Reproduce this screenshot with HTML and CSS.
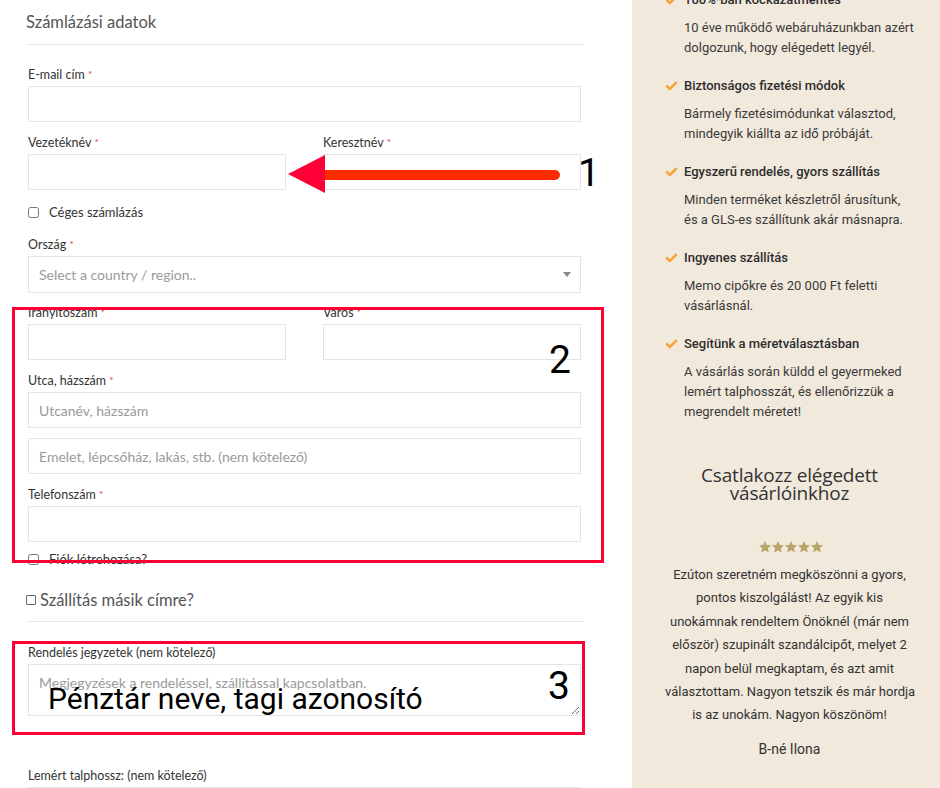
FILE: index.html
```html
<!DOCTYPE html>
<html lang="hu">
<head>
    <meta charset="UTF-8">
    <meta name="viewport" content="width=device-width, initial-scale=1.0">
    <title>Pénztár</title>
    <link rel="stylesheet" href="styles.css">
</head>
<body>
    <div class="page">
        <main class="checkout">
            <h3 class="section-title">Számlázási adatok</h3>

            <div class="field first">
                <label>E-mail cím <abbr>*</abbr></label>
                <input type="email">
            </div>

            <div class="field-row">
                <div class="field">
                    <label>Vezetéknév <abbr>*</abbr></label>
                    <input type="text">
                </div>
                <div class="field">
                    <label>Keresztnév <abbr>*</abbr></label>
                    <input type="text">
                </div>
            </div>

            <label class="check"><input type="checkbox"> Céges számlázás</label>

            <div class="field country">
                <label>Ország <abbr>*</abbr></label>
                <div class="select">
                    <span>Select a country / region..</span>
                    <b class="caret"></b>
                </div>
            </div>

            <div class="field-row zip">
                <div class="field">
                    <label>Irányítószám <abbr>*</abbr></label>
                    <input type="text">
                </div>
                <div class="field">
                    <label>Város <abbr>*</abbr></label>
                    <input type="text">
                </div>
            </div>

            <div class="field">
                <label>Utca, házszám <abbr>*</abbr></label>
                <input type="text" placeholder="Utcanév, házszám">
                <input type="text" class="second" placeholder="Emelet, lépcsőház, lakás, stb. (nem kötelező)">
            </div>

            <div class="field">
                <label>Telefonszám <abbr>*</abbr></label>
                <input type="tel">
            </div>

            <label class="check account"><input type="checkbox"> Fiók létrehozása?</label>

            <h3 class="section-title ship"><span class="box"></span>Szállítás másik címre?</h3>

            <div class="field notes">
                <label>Rendelés jegyzetek (nem kötelező)</label>
                <textarea placeholder="Megjegyzések a rendeléssel, szállítással kapcsolatban."></textarea>
            </div>

            <div class="field foot">
                <label>Lemért talphossz: (nem kötelező)</label>
                <input type="text">
            </div>

            <!-- annotations drawn over the form -->
            <div class="mark mark-2"></div>
            <div class="mark mark-3"></div>
            <svg class="arrow" width="275" height="48" viewBox="0 0 275 48">
                <line x1="36" y1="25" x2="269" y2="25" stroke="#ff2b00" stroke-width="10" stroke-linecap="round"/>
                <polygon points="2,24 39,5 39,43" fill="#ff0036"/>
            </svg>
            <span class="num num-1">1</span>
            <span class="num num-2">2</span>
            <span class="num num-3">3</span>
            <span class="note-text">Pénztár neve, tagi azonosító</span>
        </main>

        <aside class="sidebar">
            <div class="perk top">
                <div class="perk-title"><svg class="tick" width="13" height="10" viewBox="0 0 13 10"><polyline points="1.2,4.4 4.8,8 11.8,1.2" fill="none" stroke="#f7a13a" stroke-width="2.5"/></svg>100%-ban kockázatmentes</div>
                <p>10 éve működő webáruházunkban azért<br>dolgozunk, hogy elégedett legyél.</p>
            </div>
            <div class="perk">
                <div class="perk-title"><svg class="tick" width="13" height="10" viewBox="0 0 13 10"><polyline points="1.2,4.4 4.8,8 11.8,1.2" fill="none" stroke="#f7a13a" stroke-width="2.5"/></svg>Biztonságos fizetési módok</div>
                <p>Bármely fizetésimódunkat választod,<br>mindegyik kiállta az idő próbáját.</p>
            </div>
            <div class="perk">
                <div class="perk-title"><svg class="tick" width="13" height="10" viewBox="0 0 13 10"><polyline points="1.2,4.4 4.8,8 11.8,1.2" fill="none" stroke="#f7a13a" stroke-width="2.5"/></svg>Egyszerű rendelés, gyors szállítás</div>
                <p>Minden terméket készletről árusítunk,<br>és a GLS-es szállítunk akár másnapra.</p>
            </div>
            <div class="perk">
                <div class="perk-title"><svg class="tick" width="13" height="10" viewBox="0 0 13 10"><polyline points="1.2,4.4 4.8,8 11.8,1.2" fill="none" stroke="#f7a13a" stroke-width="2.5"/></svg>Ingyenes szállítás</div>
                <p>Memo cipőkre és 20 000 Ft feletti<br>vásárlásnál.</p>
            </div>
            <div class="perk">
                <div class="perk-title"><svg class="tick" width="13" height="10" viewBox="0 0 13 10"><polyline points="1.2,4.4 4.8,8 11.8,1.2" fill="none" stroke="#f7a13a" stroke-width="2.5"/></svg>Segítünk a méretválasztásban</div>
                <p>A vásárlás során küldd el geyermeked<br>lemért talphosszát, és ellenőrizzük a<br>megrendelt méretet!</p>
            </div>

            <h2 class="join">Csatlakozz elégedett<br>vásárlóinkhoz</h2>

            <div class="stars">
                <svg width="64" height="12" viewBox="0 0 64 12">
                    <g fill="#b8a468">
                        <polygon points="6,0 7.8,3.9 12,4.3 8.8,7.2 9.8,11.6 6,9.3 2.2,11.6 3.2,7.2 0,4.3 4.2,3.9"/>
                        <polygon transform="translate(13 0)" points="6,0 7.8,3.9 12,4.3 8.8,7.2 9.8,11.6 6,9.3 2.2,11.6 3.2,7.2 0,4.3 4.2,3.9"/>
                        <polygon transform="translate(26 0)" points="6,0 7.8,3.9 12,4.3 8.8,7.2 9.8,11.6 6,9.3 2.2,11.6 3.2,7.2 0,4.3 4.2,3.9"/>
                        <polygon transform="translate(39 0)" points="6,0 7.8,3.9 12,4.3 8.8,7.2 9.8,11.6 6,9.3 2.2,11.6 3.2,7.2 0,4.3 4.2,3.9"/>
                        <polygon transform="translate(52 0)" points="6,0 7.8,3.9 12,4.3 8.8,7.2 9.8,11.6 6,9.3 2.2,11.6 3.2,7.2 0,4.3 4.2,3.9"/>
                    </g>
                </svg>
            </div>

            <p class="review">Ezúton szeretném megköszönni a gyors,<br>pontos kiszolgálást! Az egyik kis<br>unokámnak rendeltem Önöknél (már nem<br>először) szupinált szandálcipőt, melyet 2<br>napon belül megkaptam, és azt amit<br>választottam. Nagyon tetszik és már hordja<br>is az unokám. Nagyon köszönöm!</p>
            <p class="author">B-né Ilona</p>
        </aside>
    </div>
</body>
</html>
```

FILE: styles.css
```css
body {
    margin: 0;
    height: 788px;
    overflow: hidden;
    background: #fff;
    font-family: 'Lato', 'Open Sans', sans-serif;
    color: #333;
}

.page {
    display: flex;
    align-items: flex-start;
}

/* Checkout form */
.checkout {
    position: relative;
    width: 632px;
    flex: none;
    box-sizing: border-box;
    padding: 12px 48px 0 26px;
    height: 788px;
}

.section-title {
    margin: 0;
    padding-bottom: 12px;
    font-size: 16.5px;
    line-height: 20px;
    font-weight: 400;
    color: #555;
    border-bottom: 1px solid #e8e8e8;
}

.field {
    margin: 13px 3px 0 2px;
}

.field.first {
    margin-top: 22px;
}

.field label {
    display: block;
    font-size: 12.5px;
    line-height: 15px;
    margin-bottom: 4px;
    color: #333;
}

.field abbr {
    color: #e2401c;
    text-decoration: none;
    font-size: 10px;
    vertical-align: top;
}

.field input,
.field textarea,
.select {
    display: block;
    width: 100%;
    height: 36px;
    box-sizing: border-box;
    margin: 0;
    padding: 0 10px;
    border: 1px solid #e4e4e4;
    background: #fff;
    font-family: inherit;
    font-size: 14px;
    color: #333;
    outline: none;
}

.field input::placeholder,
.field textarea::placeholder {
    color: #9a9a9a;
}

.field input.second {
    margin-top: 10px;
}

.field-row {
    display: grid;
    grid-template-columns: 258px 258px;
    justify-content: space-between;
    margin: 13px 3px 0 2px;
}

.field-row .field {
    margin: 0;
}

.field-row.zip {
    margin-top: 12px;
}

.check {
    display: flex;
    align-items: center;
    gap: 10px;
    margin: 14px 2px 0;
    font-size: 13px;
    line-height: 16px;
    color: #333;
}

.check input {
    width: 11px;
    height: 11px;
    margin: 0;
}

.check.account {
    margin-top: 9px;
}

.field.country {
    margin-top: 17px;
}

.select {
    height: 37px;
    display: flex;
    align-items: center;
    justify-content: space-between;
    color: #9a9a9a;
    padding-right: 9px;
}

.caret {
    width: 0;
    height: 0;
    border-left: 4px solid transparent;
    border-right: 4px solid transparent;
    border-top: 5px solid #888;
}

.section-title.ship {
    margin-top: 23px;
    padding-bottom: 11px;
    display: flex;
    align-items: center;
    gap: 4px;
}

.ship .box {
    width: 8px;
    height: 8px;
    border: 1px solid #666;
    border-radius: 1px;
}

.field.notes {
    margin-top: 23px;
}

.field textarea {
    height: 52px;
    padding: 9px 10px;
    resize: vertical;
}

.field.foot {
    margin-top: 52px;
}

/* Annotations over the form */
.mark {
    position: absolute;
    left: 12px;
    box-sizing: border-box;
    border: 3px solid #ff0036;
}

.mark-2 {
    top: 307px;
    width: 592px;
    height: 256px;
}

.mark-3 {
    top: 641px;
    width: 573px;
    height: 94px;
}

.arrow {
    position: absolute;
    left: 286px;
    top: 150px;
}

.num,
.note-text {
    position: absolute;
    font-family: 'Roboto', sans-serif;
    color: #000;
    line-height: 1;
}

.num {
    font-size: 39px;
}

.num-1 { left: 578px; top: 154px; }
.num-2 { left: 549px; top: 341px; }
.num-3 { left: 548px; top: 667px; }

.note-text {
    left: 48px;
    top: 684px;
    font-size: 30px;
}

/* Sidebar */
.sidebar {
    width: 308px;
    flex: none;
    box-sizing: border-box;
    height: 788px;
    padding: 0 20px 0 33px;
    background: #f2e9dd;
    font-family: 'Roboto', sans-serif;
    font-size: 13px;
    color: #333;
}

.perk {
    margin-bottom: 18px;
}

.perk.top {
    margin-top: -10px;
}

.perk-title {
    display: flex;
    align-items: center;
    gap: 6px;
    line-height: 20px;
    font-weight: 500;
    color: #2d2d2d;
}

.perk p {
    margin: 8px 0 0 19px;
    line-height: 20px;
    white-space: nowrap;
    color: #3a3a3a;
}

.join {
    margin: 44px 0 0;
    text-align: center;
    font-family: 'Open Sans', sans-serif;
    font-size: 19px;
    line-height: 18px;
    font-weight: 500;
    letter-spacing: -0.2px;
    color: #333;
    padding-right: 6px;
}

.stars {
    margin-top: 39px;
    text-align: center;
    padding-right: 4px;
    line-height: 12px;
    height: 12px;
}

.review {
    margin: 10px 0 0;
    text-align: center;
    line-height: 23.4px;
    white-space: nowrap;
    padding-right: 6px;
}

.author {
    margin: 12px 0 0;
    text-align: center;
    font-size: 14px;
    line-height: 20px;
    padding-right: 6px;
}
```
